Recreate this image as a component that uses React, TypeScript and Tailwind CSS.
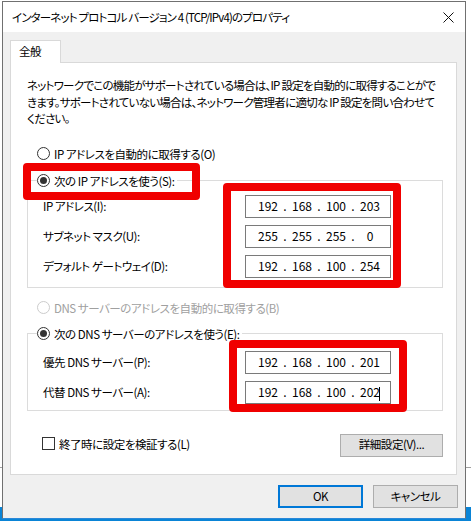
const ipRows = [
  { label: 'IP アドレス(I):', octets: ['192', '168', '100', '203'] },
  { label: 'サブネット マスク(U):', octets: ['255', '255', '255', '0'] },
  { label: 'デフォルト ゲートウェイ(D):', octets: ['192', '168', '100', '254'] },
]

const dnsRows = [
  { label: '優先 DNS サーバー(P):', octets: ['192', '168', '100', '201'] },
  { label: '代替 DNS サーバー(A):', octets: ['192', '168', '100', '202'], cursor: true },
]

function Radio({ label, checked, disabled }: { label: string; checked?: boolean; disabled?: boolean }) {
  return (
    <div className={`flex h-4 items-center gap-[4px] ${disabled ? 'text-[#a0a0a0]' : 'text-black'}`}>
      <span
        className={`flex h-[13px] w-[13px] items-center justify-center rounded-full border bg-white ${
          disabled ? 'border-[#cccccc]' : 'border-[#333333]'
        }`}
      >
        {checked && <span className="h-[7px] w-[7px] rounded-full bg-[#333333]" />}
      </span>
      <span className="whitespace-nowrap leading-4">{label}</span>
    </div>
  )
}

function IpField({ octets, cursor }: { octets: string[]; cursor?: boolean }) {
  return (
    <div className="relative flex h-[23px] w-[146px] items-center border border-[#7a7a7a] bg-white pl-[9px] text-[12px] tracking-normal">
      {octets.map((o, i) => (
        <div key={i} className="flex items-center">
          <span className="w-[26px] text-center leading-4">{o}</span>
          {i < 3 && <span className="w-[8px] text-center leading-4">.</span>}
        </div>
      ))}
      {cursor && <span className="absolute left-[133px] top-[5px] h-[14px] w-px bg-black" />}
    </div>
  )
}

function Row({ label, octets, cursor }: { label: string; octets: string[]; cursor?: boolean }) {
  return (
    <div className="flex items-center">
      <span className="w-[202px] whitespace-nowrap leading-4">{label}</span>
      <IpField octets={octets} cursor={cursor} />
    </div>
  )
}

export default function App() {
  return (
    <div className="relative h-[521px] w-[471px] overflow-hidden bg-white text-[11.5px] tracking-[-0.45px] text-black [font-family:'Noto_Sans_CJK_JP','Noto_Sans',sans-serif] [font-feature-settings:'palt']">
      {/* desktop behind the dialog */}
      <div className="absolute left-0 top-[467px] h-px w-[471px] bg-[#a0a0a0]" />
      <div className="absolute bottom-0 left-0 h-[14px] w-[471px] bg-[#0a84d6]" />

      {/* dialog window */}
      <div className="absolute left-[2px] top-[1px] flex h-[518px] w-[464px] flex-col border border-[#707070] border-b-[#2b88d8] bg-[#f0f0f0]">
        <div className="flex h-[30px] items-center justify-between bg-white pl-[9px] pr-[9px]">
          <span className="whitespace-nowrap leading-4 tracking-[-0.85px]">インターネット プロトコル バージョン 4 (TCP/IPv4)のプロパティ</span>
          <svg width="11" height="11" viewBox="0 0 11 11" className="mr-[2px]">
            <path d="M0.5 0.5 L10.5 10.5 M10.5 0.5 L0.5 10.5" stroke="#111" strokeWidth="1" />
          </svg>
        </div>

        <div className="flex flex-col pl-[7px] pr-[8px] pt-[8px]">
          <div className="relative z-10 -mb-px flex h-[23px] w-[51px] items-center border border-b-0 border-[#d9d9d9] bg-white pl-[8px]">
            全般
          </div>

          <div className="flex h-[413px] w-[447px] flex-col border border-[#d9d9d9] bg-white pl-[16px] pr-[13px] pt-[14px]">
            <p className="whitespace-nowrap leading-[16.5px] tracking-[-0.75px]">
              ネットワークでこの機能がサポートされている場合は、IP 設定を自動的に取得することがで
              <br />
              きます。サポートされていない場合は、ネットワーク管理者に適切な IP 設定を問い合わせて
              <br />
              ください。
            </p>

            <div className="ml-[10px] mt-[19px]">
              <Radio label="IP アドレスを自動的に取得する(O)" />
            </div>

            <fieldset className="mt-[11px] w-[416px] border border-[#dcdcdc] pb-[9px] pl-[15px] pt-[6px]">
              <legend className="ml-[-6px] pr-[2px]">
                <Radio label="次の IP アドレスを使う(S):" checked />
              </legend>
              <div className="flex flex-col gap-[7px]">
                {ipRows.map((r) => (
                  <Row key={r.label} label={r.label} octets={r.octets} />
                ))}
              </div>
            </fieldset>

            <div className="ml-[10px] mt-[12px]">
              <Radio label="DNS サーバーのアドレスを自動的に取得する(B)" disabled />
            </div>

            <fieldset className="mt-[10px] w-[416px] border border-[#dcdcdc] pb-[6px] pl-[15px] pt-[9px]">
              <legend className="ml-[-6px] pr-[2px]">
                <Radio label="次の DNS サーバーのアドレスを使う(E):" checked />
              </legend>
              <div className="flex flex-col gap-[7px]">
                {dnsRows.map((r) => (
                  <Row key={r.label} label={r.label} octets={r.octets} cursor={r.cursor} />
                ))}
              </div>
            </fieldset>

            <div className="mt-[23px] flex w-[416px] items-start justify-between">
              <div className="ml-[15px] mt-[2px] flex items-center gap-[4px]">
                <span className="h-[13px] w-[13px] border border-[#333333] bg-white" />
                <span className="whitespace-nowrap leading-4">終了時に設定を検証する(L)</span>
              </div>
              <button className="flex h-[23px] w-[103px] items-center justify-center border border-[#adadad] bg-[#e1e1e1]">
                詳細設定(V)...
              </button>
            </div>
          </div>

          <div className="mt-[10px] flex justify-end gap-[10px]">
            <button className="flex h-[23px] w-[85px] items-center justify-center border-2 border-[#0078d7] bg-[#e1e1e1]">
              OK
            </button>
            <button className="mr-[-1px] flex h-[23px] w-[85px] items-center justify-center border border-[#adadad] bg-[#e1e1e1]">
              キャンセル
            </button>
          </div>
        </div>
      </div>

      {/* red annotation frames */}
      <div className="absolute left-[23px] top-[163px] h-[37px] w-[177px] rounded-[4px] border-[8px] border-[#f00000]" />
      <div className="absolute left-[223px] top-[183px] h-[105px] w-[178px] rounded-[4px] border-[8px] border-[#f00000]" />
      <div className="absolute left-[229px] top-[340px] h-[72px] w-[178px] rounded-[4px] border-[8px] border-[#f00000]" />
    </div>
  )
}
